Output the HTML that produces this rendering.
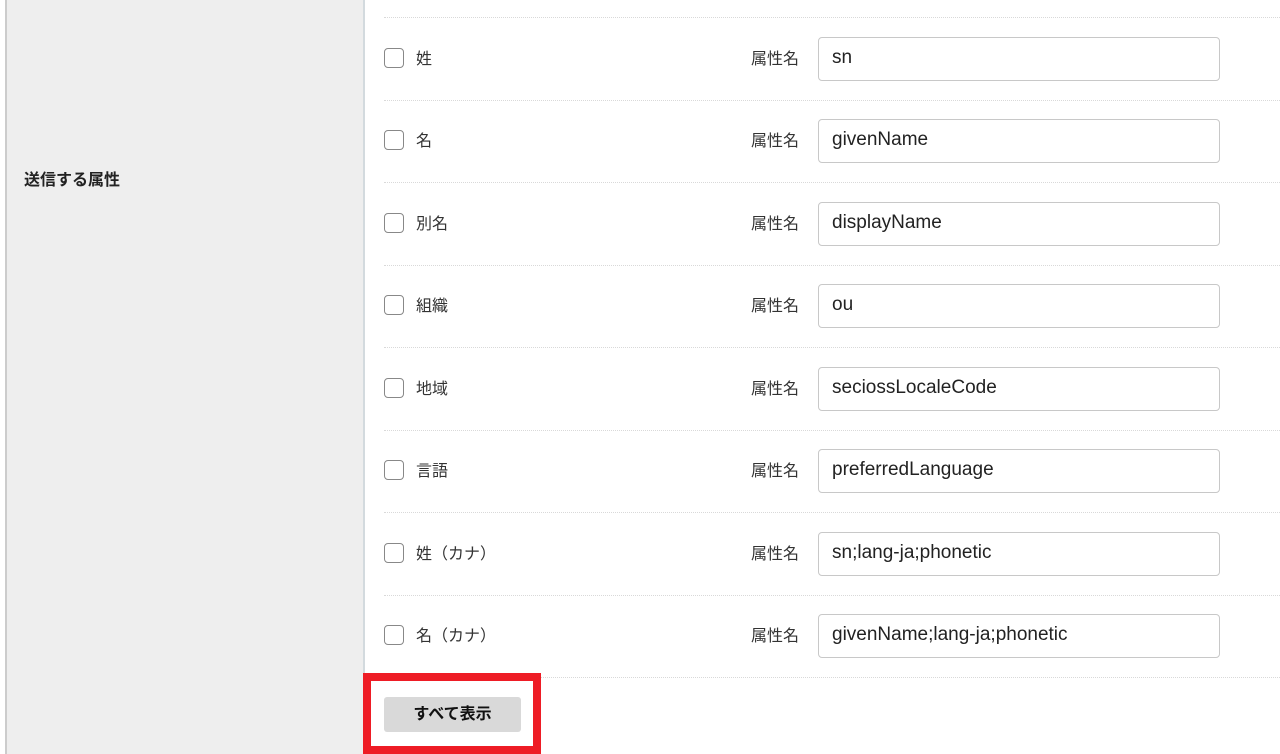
<!DOCTYPE html>
<html><head><meta charset="utf-8"><style>
*{box-sizing:border-box;margin:0;padding:0}
body{width:1280px;height:754px;overflow:hidden;background:#fff;font-family:"Liberation Sans","Noto Sans CJK JP",sans-serif;color:#222;position:relative}
.left{position:absolute;left:0;top:0;width:364px;height:754px;background:#eee;border-left:5px solid #fff}
.left::before{content:"";position:absolute;left:0;top:0;width:2px;height:754px;background:#ccc}
.left .t{position:absolute;left:19px;top:166px;font-size:16px;font-weight:bold}
.vline{position:absolute;left:363px;top:0;width:2px;height:754px;background:#d3dade}
.sep{position:absolute;left:384px;right:0;height:0;border-top:1px dotted #d9d9d9}
.row{position:absolute;left:0;width:1280px;height:44px}
.cb{position:absolute;left:384px;top:11px;width:20px;height:20px;border:1.5px solid #888;border-radius:4px;background:#fff}
.lb{position:absolute;left:416px;top:8px;font-size:16px;color:#333}
.an{position:absolute;left:751px;top:8px;font-size:16px;color:#333}
.in{position:absolute;left:818px;top:0;width:402px;height:44px;border:1px solid #c8c8c8;border-radius:4px;font-size:19px;padding:9px 13px;color:#222}
.red{position:absolute;left:363px;top:673px;width:178px;height:81px;border:8px solid #ee1c25}
.btn{position:absolute;left:384px;top:697px;width:137px;height:35px;background:#d9d9d9;border-radius:3px;font-size:16px;font-weight:bold;text-align:center;line-height:35px;color:#111}
</style></head><body>
<div class="left"><div class="t">送信する属性</div></div>
<div class="vline"></div>
<div class="sep" style="top:17px"></div>
<div class="sep" style="top:100px"></div>
<div class="sep" style="top:182px"></div>
<div class="sep" style="top:265px"></div>
<div class="sep" style="top:347px"></div>
<div class="sep" style="top:430px"></div>
<div class="sep" style="top:512px"></div>
<div class="sep" style="top:595px"></div>
<div class="sep" style="top:677px"></div>
<div class="row" style="top:37px"><div class="cb"></div><div class="lb">姓</div><div class="an">属性名</div><div class="in">sn</div></div>
<div class="row" style="top:119px"><div class="cb"></div><div class="lb">名</div><div class="an">属性名</div><div class="in">givenName</div></div>
<div class="row" style="top:202px"><div class="cb"></div><div class="lb">別名</div><div class="an">属性名</div><div class="in">displayName</div></div>
<div class="row" style="top:284px"><div class="cb"></div><div class="lb">組織</div><div class="an">属性名</div><div class="in">ou</div></div>
<div class="row" style="top:367px"><div class="cb"></div><div class="lb">地域</div><div class="an">属性名</div><div class="in">seciossLocaleCode</div></div>
<div class="row" style="top:449px"><div class="cb"></div><div class="lb">言語</div><div class="an">属性名</div><div class="in">preferredLanguage</div></div>
<div class="row" style="top:532px"><div class="cb"></div><div class="lb">姓（カナ）</div><div class="an">属性名</div><div class="in">sn;lang-ja;phonetic</div></div>
<div class="row" style="top:614px"><div class="cb"></div><div class="lb">名（カナ）</div><div class="an">属性名</div><div class="in">givenName;lang-ja;phonetic</div></div>
<div class="red"></div>
<div class="btn">すべて表示</div>
</body></html>
